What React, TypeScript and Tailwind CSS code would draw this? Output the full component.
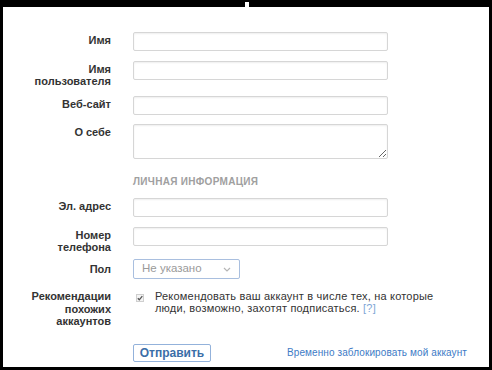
import React from 'react';

const labelCls =
  "w-[108px] shrink-0 text-right font-bold text-[11px] leading-[12px] text-[#333] pt-[2px]";
const inputCls =
  "block w-[255px] h-[19px] border border-[#d6d6d6] rounded-[2px] bg-white shadow-[inset_0_1px_2px_rgba(0,0,0,0.07)] outline-none px-1 text-[11px]";

const Row = ({
  label,
  className = "",
  labelClassName = "",
  children,
}: {
  label: React.ReactNode;
  className?: string;
  labelClassName?: string;
  children: React.ReactNode;
}) => (
  <div className={`flex items-start gap-[22px] ${className}`}>
    <div className={`${labelCls} ${labelClassName}`}>{label}</div>
    <div>{children}</div>
  </div>
);

export default function App() {
  return (
    <div
      className="relative w-[492px] h-[370px] bg-black pt-[7px] pl-[3px] pr-[3px] pb-[3px]"
      style={{ fontFamily: '"Liberation Sans", Arial, sans-serif' }}
    >
      {/* little white notch in the top frame */}
      <div className="absolute left-[245px] top-[2px] w-[4px] h-[5px] bg-white" />

      <div className="h-full bg-white pt-[25px]">
        <Row label="Имя">
          <input className={inputCls} />
        </Row>

        <Row label={<>Имя<br />пользователя</>} className="mt-[10px]">
          <input className={inputCls} />
        </Row>

        <Row label="Веб-сайт" className="mt-[9px]">
          <input className={inputCls} />
        </Row>

        <Row label="О себе" className="mt-[9px]">
          <textarea className="block w-[255px] h-[35px] border border-[#d6d6d6] rounded-[2px] bg-white shadow-[inset_0_1px_2px_rgba(0,0,0,0.07)] outline-none" />
        </Row>

        <div className="mt-[17px] pl-[130px] text-[10px] leading-[12px] font-bold tracking-[0.3px] text-[#a0a0a0]">
          ЛИЧНАЯ ИНФОРМАЦИЯ
        </div>

        <Row label="Эл. адрес" className="mt-[10px]">
          <input className={inputCls} />
        </Row>

        <Row label={<>Номер<br />телефона</>} className="mt-[10px]">
          <input className={inputCls} />
        </Row>

        <Row label="Пол" className="mt-[6px]" labelClassName="pt-[4px]">
          <div className="flex items-center justify-between w-[107px] h-[20px] border border-[#a9bfdf] rounded-[2px] bg-white pl-[8px] pr-[8px] text-[11.5px] text-[#9a9a9a]">
            <span>Не указано</span>
            <svg width="8" height="5" viewBox="0 0 8 5" fill="none">
              <path d="M1 1l3 3 3-3" stroke="#b5b5b5" strokeWidth="1.2" />
            </svg>
          </div>
        </Row>

        <div className="flex items-start gap-[22px] mt-[11px]">
          <div className="w-[108px] shrink-0 text-right font-bold text-[11px] leading-[12.5px] text-[#333]">
            Рекомендации<br />похожих<br />аккаунтов
          </div>
          <div className="flex items-start">
            <svg className="mt-[4px] ml-[3px] shrink-0" width="8" height="8" viewBox="0 0 8 8">
              <rect x="0.5" y="0.5" width="7" height="7" fill="#f4f4f4" stroke="#cfcfcf" />
              <path d="M1.8 4.2l1.5 1.6 3-3.6" stroke="#555" strokeWidth="1.3" fill="none" />
            </svg>
            <p className="ml-[11px] w-[295px] text-[11px] leading-[12px] tracking-[0.2px] text-[#333]">
              Рекомендовать ваш аккаунт в числе тех, на которые люди, возможно, захотят подписаться.{' '}
              <span className="text-[#7ea6d6]">[?]</span>
            </p>
          </div>
        </div>

        <div className="flex items-center mt-[16px] pl-[130px]">
          <button className="w-[78px] h-[18px] border border-[#93b2db] rounded-[2px] bg-white text-[12px] font-bold text-[#3b6ea8] leading-none">
            Отправить
          </button>
          <a className="ml-[76px] text-[10px] text-[#3d7bc6] tracking-[0.1px]">
            Временно заблокировать мой аккаунт
          </a>
        </div>
      </div>
    </div>
  );
}
